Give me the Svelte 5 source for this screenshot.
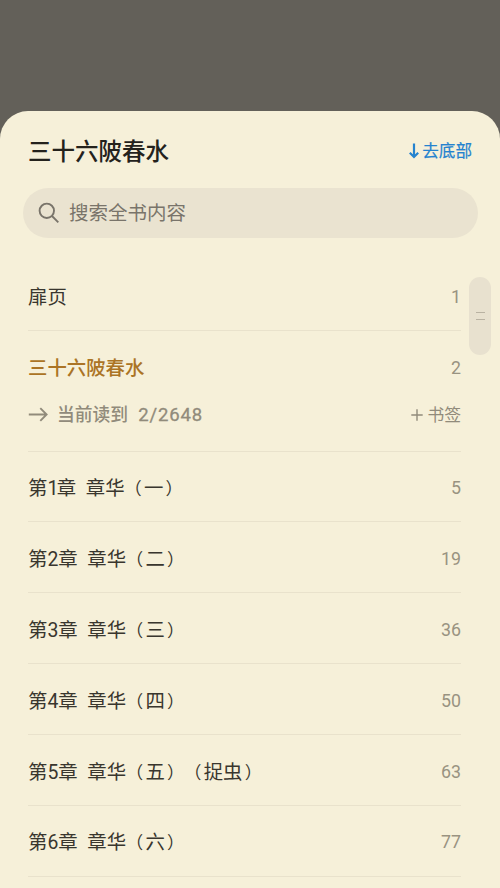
<script>
  const chapters = [
    { number: 1, name: '章华', notes: ['一'], page: 5 },
    { number: 2, name: '章华', notes: ['二'], page: 19 },
    { number: 3, name: '章华', notes: ['三'], page: 36 },
    { number: 4, name: '章华', notes: ['四'], page: 50 },
    { number: 5, name: '章华', notes: ['五', '捉虫'], page: 63 },
    { number: 6, name: '章华', notes: ['六'], page: 77 }
  ];
</script>

<div class="screen">
  <section class="sheet">
    <header>
      <h1>三十六陂春水</h1>
      <button class="bottom">
        <svg width="12" height="16" viewBox="0 0 12 16"><path d="M6 .6V13.5M1.8 9.8 6 14 10.2 9.8" fill="none" stroke="currentColor" stroke-width="2.2" /></svg>
        <span>去底部</span>
      </button>
    </header>

    <div class="search">
      <svg width="22" height="22" viewBox="0 0 22 22"><g fill="none" stroke="currentColor" stroke-width="1.9"><circle cx="8.8" cy="8.8" r="7.2" /><path d="m14 14 6.3 6.3" /></g></svg>
      <span>搜索全书内容</span>
    </div>

    <div class="list">
      <div class="row"><span class="name">扉页</span><span class="page">1</span></div>
      <div class="current">
        <div class="line"><span class="name active">三十六陂春水</span><span class="page">2</span></div>
        <div class="line status">
          <svg width="20" height="16" viewBox="0 0 20 16"><path d="M.8 7.5H18.5M12.3 1.2 18.6 7.5 12.3 13.8" fill="none" stroke="currentColor" stroke-width="1.9" /></svg>
          <span class="reading">当前读到</span><span class="progress">2/2648</span>
          <span class="mark">
            <svg width="12" height="12" viewBox="0 0 12 12"><path d="M6 .3V11.7M.3 6H11.7" stroke="currentColor" stroke-width="1.4" /></svg>
            <span>书签</span>
          </span>
        </div>
      </div>
      {#each chapters as c}
        <div class="row">
          <span class="name">第<span class:one={c.number === 1}>{c.number}</span>章{'  '}{c.name}{#each c.notes as note}<span class="open">（</span>{note}<span class="close">）</span>{/each}</span>
          <span class="page">{c.page}</span>
        </div>
      {/each}
    </div>
    <div class="thumb"><i></i><i></i></div>
  </section>
</div>

<style>
  :global(body) { background: #636059; overflow: hidden; }
  .screen {
    height: 888px;
    box-sizing: border-box;
    padding-top: 111px;
    background: #636059;
    overflow: hidden;
    font-family: Roboto, "Noto Sans CJK SC", sans-serif;
    text-spacing-trim: space-all;
  }
  .sheet {
    position: relative;
    height: 777px;
    background: #f6f0d9;
    border-radius: 28px 28px 0 0;
    overflow: hidden;
  }
  svg { display: block; flex: none; }
  header {
    height: 77px;
    box-sizing: border-box;
    padding: 5px 28px 0;
    display: flex;
    justify-content: space-between;
    align-items: center;
  }
  h1 {
    margin: 0;
    font-size: 23.5px;
    font-weight: 500;
    line-height: 36px;
    color: #24221c;
  }
  .bottom {
    display: flex;
    align-items: center;
    gap: 2px;
    border: 0;
    padding: 0;
    background: none;
    font: 400 16.6px/24px Roboto, "Noto Sans CJK SC", sans-serif;
    -webkit-text-stroke: 0.2px currentColor;
    color: #2583cf;
  }
  .bottom svg { margin-top: -2px; }
  .search {
    height: 50px;
    margin: 0 22px 0 23px;
    padding-left: 15px;
    box-sizing: border-box;
    border-radius: 25px;
    background: #eae3d0;
    display: flex;
    align-items: center;
    gap: 9px;
    font-size: 19.5px;
    line-height: 28px;
    color: #79746a;
  }
  .search span { padding-top: 2px; }
  .list { margin: 22px 39px 0 28px; }
  .row {
    height: 70.85px;
    box-sizing: border-box;
    border-bottom: 1px solid #e9e2cc;
    display: flex;
    align-items: center;
    justify-content: space-between;
    padding-top: 3.5px;
  }
  .name {
    font-size: 19.4px;
    line-height: 28px;
    padding-top: 2px;
    color: #39362e;
    white-space: pre;
  }
  .one { letter-spacing: -1.5px; }
  .open, .close { font-size: 17.2px; }
  .open { margin-right: 2.2px; }
  .close { margin-left: 2.2px; }
  .page { font-size: 17.8px; line-height: 28px; color: #999381; }
  .current {
    height: 120.7px;
    box-sizing: border-box;
    border-bottom: 1px solid #e9e2cc;
    padding-top: 22px;
  }
  .line { display: flex; align-items: center; justify-content: space-between; height: 30px; }
  .active { color: #ab7425; font-weight: 500; }
  .status { margin-top: 17px; justify-content: flex-start; color: #918b7b; font-size: 17.8px; line-height: 28px; }
  .reading { margin-left: 9px; font-weight: 500; }
  .progress { margin-left: 10px; font-size: 18.5px; font-weight: 400; letter-spacing: 0.9px; -webkit-text-stroke: 0.3px currentColor; }
  .mark { margin-left: auto; display: flex; align-items: center; gap: 4px; font-size: 16.8px; }
  .thumb {
    position: absolute;
    top: 166px;
    right: 9px;
    width: 22px;
    height: 78px;
    border-radius: 11px;
    background: #e8e1cf;
    display: flex;
    flex-direction: column;
    align-items: center;
    justify-content: center;
    gap: 6px;
  }
  .thumb i { width: 9px; height: 1px; background: #b9b2a2; }
</style>
